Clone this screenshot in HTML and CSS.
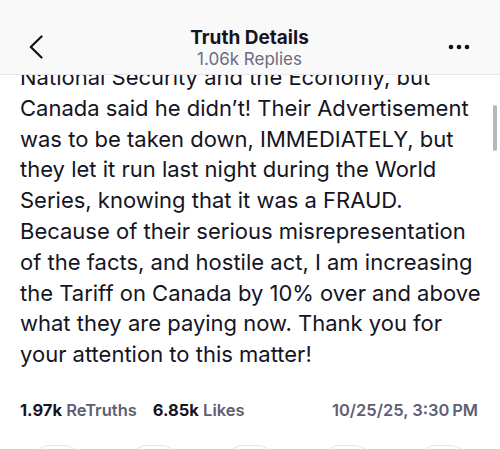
FILE: index.html
```html
<!DOCTYPE html>
<html>
<head>
<meta charset="utf-8">
<link rel="stylesheet" href="styles.css">
</head>
<body>
<div class="screen">
  <header class="topbar">
    <span class="iconbox"><svg class="back" width="14" height="24" viewBox="0 0 14 24"><path d="M12.5 1.5 L1.8 12 L12.5 22.5" fill="none" stroke="#111" stroke-width="2.2" stroke-linecap="round" stroke-linejoin="round"/></svg></span>
    <div class="title">
      <div class="t1">Truth Details</div>
      <div class="t2">1.06k Replies</div>
    </div>
    <span class="iconbox right"><svg class="more" width="22" height="6" viewBox="0 0 22 6"><circle cx="3" cy="3" r="2.3" fill="#111"/><circle cx="11" cy="3" r="2.3" fill="#111"/><circle cx="19" cy="3" r="2.3" fill="#111"/></svg></span>
  </header>
  <main class="content">
    <p class="post">National Security and the Economy, but<br>Canada said he didn’t! Their Advertisement<br>was to be taken down, IMMEDIATELY, but<br>they let it run last night during the World<br>Series, knowing that it was a FRAUD.<br>Because of their serious misrepresentation<br>of the facts, and hostile act, I am increasing<br>the Tariff on Canada by 10% over and above<br>what they are paying now. Thank you for<br>your attention to this matter!</p>
    <div class="stats">
      <span class="stat"><b>1.97k</b> ReTruths</span>
      <span class="stat"><b>6.85k</b> Likes</span>
      <span class="date">10/25/25, 3:30&#8201;PM</span>
    </div>
    <div class="actions">
      <span class="pill"></span><span class="pill"></span><span class="pill"></span><span class="pill"></span><span class="pill"></span>
    </div>
    <div class="scrollbar"></div>
  </main>
</div>
</body>
</html>
```
FILE: styles.css
```css
* { box-sizing: border-box; }
html, body { margin: 0; padding: 0; background: #fff; }
body { font-family: Inter, "Noto Sans", sans-serif; color: #15151f; }
.screen { width: 500px; height: 449px; overflow: hidden; background: #fff; display: flex; flex-direction: column; }
.topbar {
  flex: 0 0 75px;
  background: #f9f9fa;
  border-bottom: 1px solid #e6e6ea;
  display: flex; align-items: flex-start;
  padding: 0 30px 0 29px;
}
.iconbox { width: 22px; display: flex; }
.iconbox.right { justify-content: flex-end; }
.back { margin-top: 35px; }
.more { margin-top: 44px; }
.title { flex: 1; text-align: center; padding-top: 26px; }
.t1 { font-size: 19px; font-weight: 700; color: #15151f; line-height: 23px; }
.t2 { font-size: 17px; color: #6b6a80; line-height: 21px; }
.content { position: relative; flex: 1; overflow: hidden; padding: 0 10px 0 20px; }
.post {
  margin: -13px 0 0 0;
  font-size: 22px;
  line-height: 30.8px;
  white-space: nowrap;
}
.stats {
  display: flex;
  align-items: baseline;
  margin-top: 30px;
  margin-right: 12px;
  font-size: 16.5px;
  line-height: 20px;
  font-weight: 600;
  color: #5f5e74;
}
.stat { margin-right: 16px; }
.stat b { color: #15151f; font-weight: 700; }
.date { margin-left: auto; }
.actions { display: flex; justify-content: space-between; padding: 0 22px 0 12px; margin-top: 25px; }
.pill { width: 50px; height: 36px; border: 1px solid #e4e4e8; border-radius: 18px; }
.scrollbar { position: absolute; left: 493px; top: 30px; width: 4px; height: 46px; border-radius: 2px; background: #b8b8bc; }
```
